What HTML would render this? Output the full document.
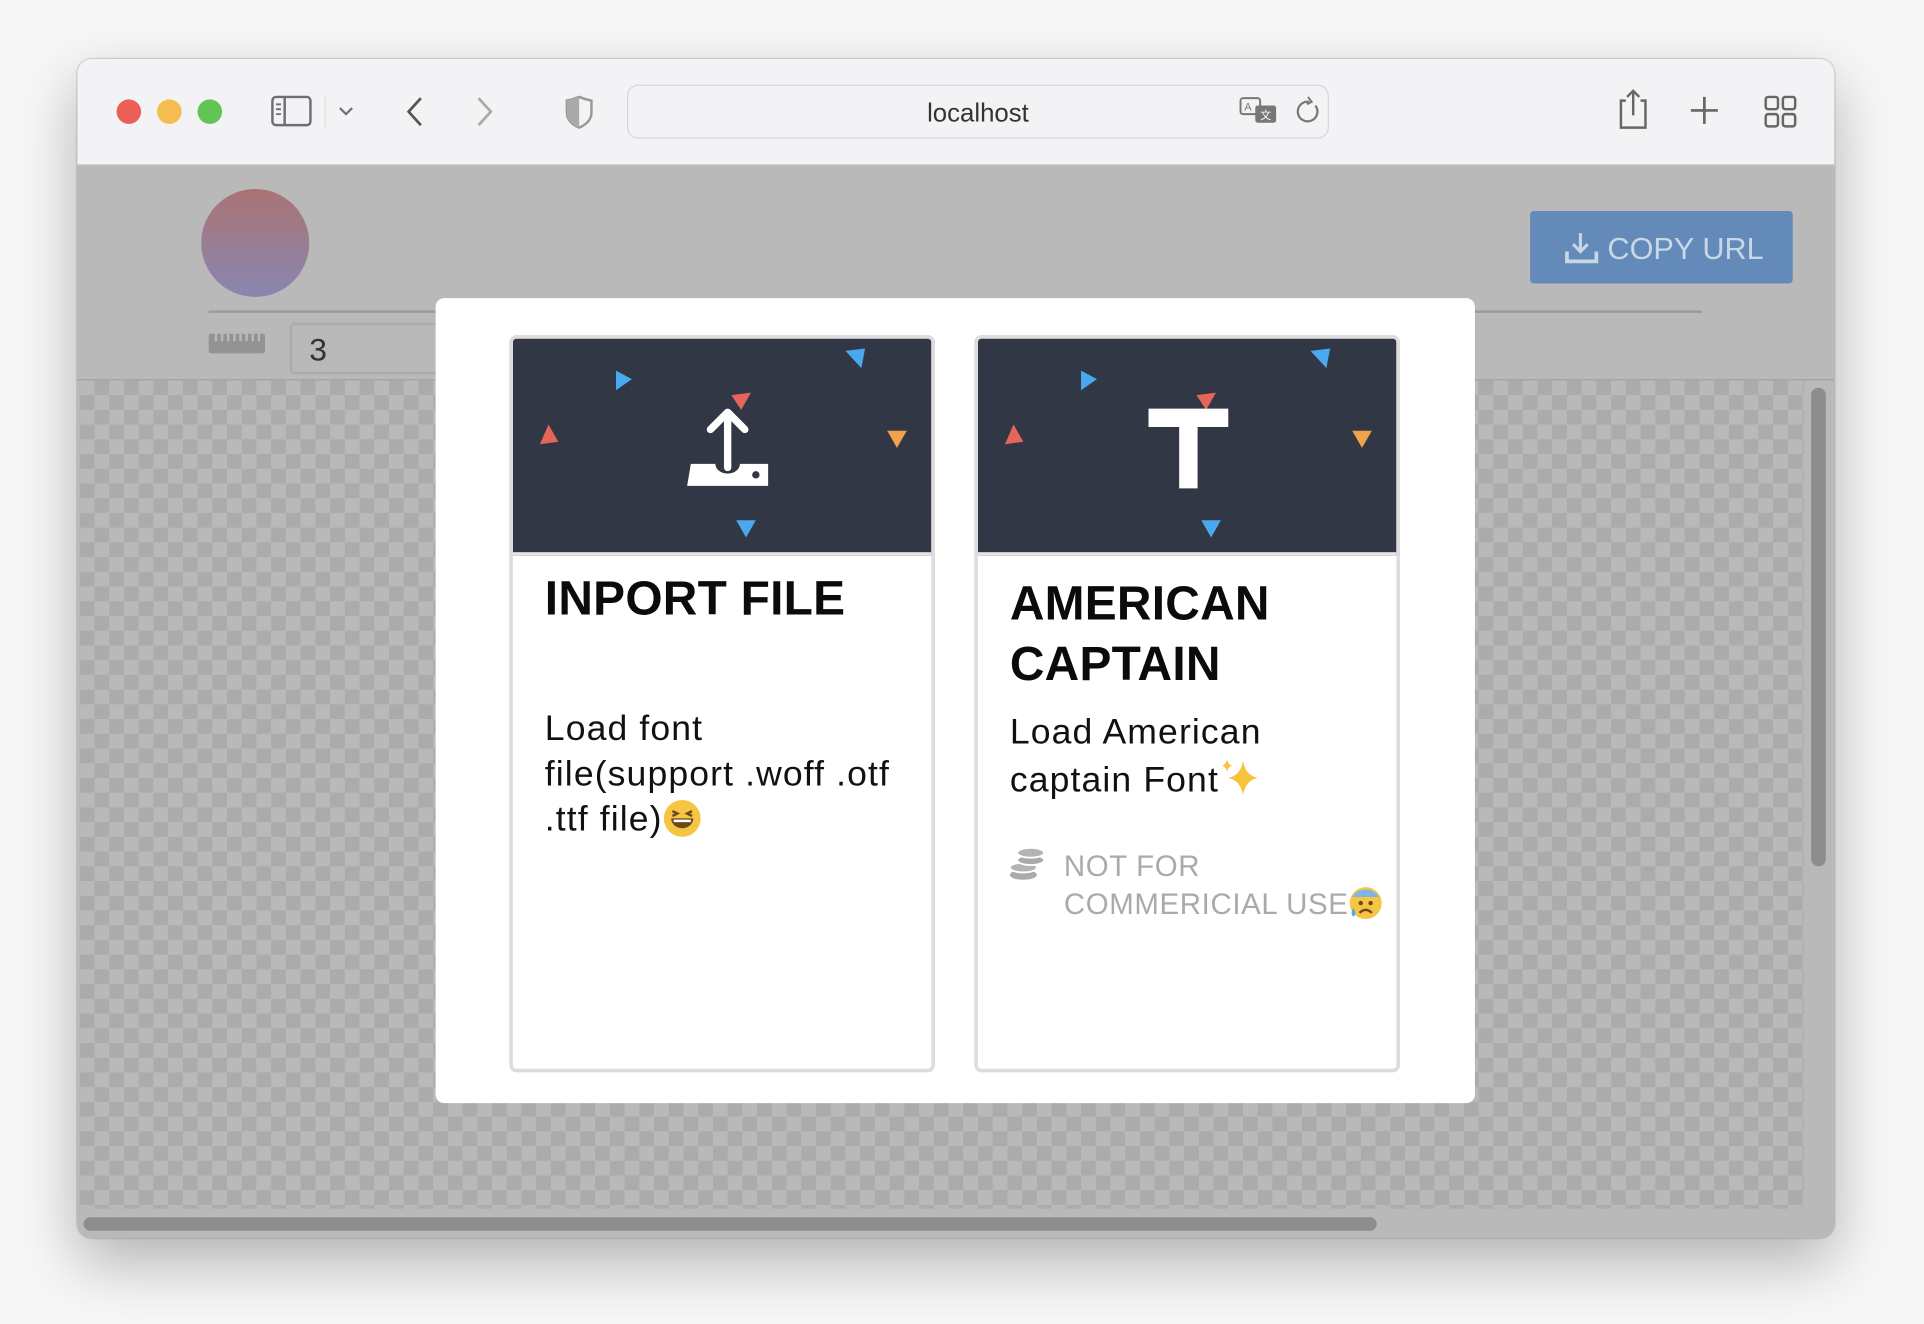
<!DOCTYPE html>
<html><head><meta charset="utf-8"><style>
html,body{margin:0;padding:0;width:1924px;height:1324px;overflow:hidden;background:#f7f7f7;font-family:"Liberation Sans",sans-serif}
#s{position:absolute;left:0;top:0;width:1568px;height:1079px;transform:scale(1.22704);transform-origin:0 0}
.a{position:absolute}
.win{left:63px;top:48px;width:1432px;height:961px;border-radius:12px;overflow:hidden;box-shadow:0 20px 50px rgba(0,0,0,.28),0 0 0 1px rgba(0,0,0,.12);background:#bab9ba}
.tb{left:0;top:0;width:1432px;height:86px;background:#f3f2f5;border-bottom:1px solid #b9b9b9}
.dot{width:20px;height:20px;border-radius:50%;top:33px}
.card{width:341px;height:595px;border:3px solid #dedcdd;border-radius:6px;background:#fff;overflow:hidden}
.hd{left:0;top:0;width:100%;height:174px;background:#323746;border-bottom:3px solid #e6e4e5}
.tt{font-weight:bold;font-size:39px;color:#0b0b0b;line-height:49px;letter-spacing:0.2px}
.bd{font-size:29px;color:#111;line-height:37px;white-space:nowrap;letter-spacing:0.9px}
</style></head><body><div id="s">
<div class="a win">
 <div class="a tb">
  <div class="a dot" style="left:32px;background:#ec5f57"></div>
  <div class="a dot" style="left:65px;background:#f5bd4f"></div>
  <div class="a dot" style="left:98px;background:#61c455"></div>
  <svg class="a" style="left:155px;top:28px" width="90" height="32"><rect x="4" y="3" width="31" height="23" rx="3" fill="none" stroke="#6e6e72" stroke-width="2"/><line x1="14" y1="3" x2="14" y2="26" stroke="#6e6e72" stroke-width="2"/><line x1="7" y1="9" x2="11" y2="9" stroke="#6e6e72" stroke-width="1.5"/><line x1="7" y1="13" x2="11" y2="13" stroke="#6e6e72" stroke-width="1.5"/><line x1="7" y1="17" x2="11" y2="17" stroke="#6e6e72" stroke-width="1.5"/><line x1="47" y1="2" x2="47" y2="28" stroke="#ddd" stroke-width="1"/><path d="M59 12l5 5 5-5" fill="none" stroke="#6e6e72" stroke-width="1.8"/></svg>
  <svg class="a" style="left:262px;top:28px" width="170" height="32"><path d="M18 4L8 15l10 11" fill="none" stroke="#555" stroke-width="2.2"/><path d="M65 4l10 11-10 11" fill="none" stroke="#aaa" stroke-width="2.2"/><path d="M147 3c5 2 10 3 10 3v10c0 6-5 10-10 12-5-2-10-6-10-12V6s5-1 10-3z" fill="none" stroke="#999" stroke-width="2"/><path d="M147 3v25c-5-2-10-6-10-12V6z" fill="#aaa"/></svg>
  <div class="a" style="left:448px;top:21px;width:570px;height:42px;border:1px solid #d6d6d8;border-radius:9px;background:#f3f2f5"></div>
  <div class="a" style="left:448px;top:33px;width:572px;text-align:center;font-size:21px;color:#333">localhost</div>
  <svg class="a" style="left:946px;top:29px" width="70" height="30"><rect x="2" y="3" width="16" height="13" rx="2" fill="none" stroke="#777" stroke-width="1.6"/><text x="5" y="13" font-size="9" fill="#777" font-family="Liberation Sans">A</text><rect x="14" y="9" width="17" height="14" rx="2" fill="#777"/><text x="18" y="20" font-size="9" fill="#fff" font-family="Liberation Sans">文</text><path d="M63 9a8 8 0 1 1-5-3" fill="none" stroke="#777" stroke-width="1.8"/><path d="M57 2l3 4-4 2" fill="none" stroke="#777" stroke-width="1.6"/></svg>
  <svg class="a" style="left:1250px;top:24px" width="160" height="36"><path d="M12 10H8v22h20V10h-4M18 2v20M13 7l5-5 5 5" fill="none" stroke="#666" stroke-width="2"/><path d="M76 7v22M65 18h22" stroke="#666" stroke-width="2.2"/><rect x="126" y="7" width="10" height="10" rx="2" fill="none" stroke="#666" stroke-width="2"/><rect x="140" y="7" width="10" height="10" rx="2" fill="none" stroke="#666" stroke-width="2"/><rect x="126" y="21" width="10" height="10" rx="2" fill="none" stroke="#666" stroke-width="2"/><rect x="140" y="21" width="10" height="10" rx="2" fill="none" stroke="#666" stroke-width="2"/></svg>
 </div>
 <div class="a" style="left:101px;top:106px;width:88px;height:88px;border-radius:50%;background:linear-gradient(#a87474,#8a86b0)"></div>
 <div class="a" style="left:1184px;top:124px;width:214px;height:59px;background:#638ab8;border-radius:3px;color:#c9d6e6;font-size:25px;line-height:59px"><svg class="a" style="left:28px;top:17px" width="28" height="28"><path d="M13 1v15M7 10l6 6 6-6" fill="none" stroke="#c9d6e6" stroke-width="2.5"/><path d="M2 16v8h24v-8" fill="none" stroke="#c9d6e6" stroke-width="3"/></svg><span class="a" style="left:63px;top:2px">COPY URL</span></div>
 <div class="a" style="left:107px;top:205px;width:1217px;height:2px;background:#9c9b9c"></div>
 <svg class="a" style="left:107px;top:220px" width="48" height="22"><rect x="0" y="4" width="46" height="16" rx="2" fill="#949394"/><path d="M6 4v6M11 4v6M16 4v6M21 4v6M26 4v6M31 4v6M36 4v6M41 4v6" stroke="#bab9ba" stroke-width="2"/></svg>
 <div class="a" style="left:173px;top:215px;width:130px;height:38px;border:2px solid #adacad;border-radius:4px;font-size:26px;color:#333;line-height:40px;padding-left:14px">3</div>
 <div class="a" style="left:2px;top:262px;width:1405px;height:675px;background-color:#bab9ba;background-image:linear-gradient(45deg,#acabac 25%,transparent 25%,transparent 75%,#acabac 75%),linear-gradient(45deg,#acabac 25%,transparent 25%,transparent 75%,#acabac 75%);background-size:24px 24px;background-position:0 0,12px 12px"></div>
 <div class="a" style="left:0;top:261px;width:1432px;height:1px;background:#a3a2a3"></div>
 <div class="a" style="left:1413px;top:268px;width:12px;height:390px;border-radius:6px;background:#8e8d8e"></div>
 <div class="a" style="left:5px;top:944px;width:1054px;height:11px;border-radius:6px;background:#8e8d8e"></div>
</div>

<div class="a" style="left:355px;top:243px;width:847px;height:656px;background:#fff;border-radius:7px"></div>

<div class="a card" style="left:415px;top:273px">
 <div class="a hd"><svg width="346" height="174">
  <polygon points="84,26 84,42 97,33" fill="#4aa8ef"/>
  <polygon points="271,10 287,8 284,24" fill="#4aa8ef"/>
  <polygon points="178,46 194,44 186,58" fill="#e5655b"/>
  <polygon points="22,86 37,84 29,70" fill="#e5655b"/>
  <polygon points="305,75 321,75 313,89" fill="#f2a34a"/>
  <polygon points="182,148 198,148 190,162" fill="#4aa8ef"/>
  <path d="M175 105V60M161 74l14-14 14 14" fill="none" stroke="#fff" stroke-width="6" stroke-linecap="round" stroke-linejoin="round"/>
  <path d="M145 102h20a10 8 0 0 0 20 0h23v18h-66z" fill="#fff"/><circle cx="198" cy="111" r="3" fill="#323746"/>
 </svg></div>
 <div class="a tt" style="left:26px;top:188px">INPORT FILE</div>
 <div class="a bd" style="left:26px;top:300px">Load font<br>file(support .woff .otf<br>.ttf file)<svg width="32" height="32" style="vertical-align:-6px"><circle cx="16" cy="16" r="15" fill="#f6c544"/><path d="M7 16h18a9 8 0 0 1-18 0z" fill="#6b4a18"/><path d="M9 17h14v2H9z" fill="#fff"/><path d="M8 10l4 2-4 2M24 10l-4 2 4 2" fill="none" stroke="#6b4a18" stroke-width="2"/></svg></div>
</div>

<div class="a card" style="left:794px;top:273px">
 <div class="a hd"><svg width="346" height="174">
  <polygon points="84,26 84,42 97,33" fill="#4aa8ef"/>
  <polygon points="271,10 287,8 284,24" fill="#4aa8ef"/>
  <polygon points="178,46 194,44 186,58" fill="#e5655b"/>
  <polygon points="22,86 37,84 29,70" fill="#e5655b"/>
  <polygon points="305,75 321,75 313,89" fill="#f2a34a"/>
  <polygon points="182,148 198,148 190,162" fill="#4aa8ef"/>
  <path d="M139 57h65v15h-25v50h-15v-50h-25z" fill="#fff"/>
 </svg></div>
 <div class="a tt" style="left:26px;top:192px">AMERICAN<br>CAPTAIN</div>
 <div class="a bd" style="left:26px;top:303px">Load American<br>captain Font<svg width="34" height="34" style="vertical-align:-5px"><path d="M20 4q2 12 12 14q-10 2-12 14q-2-12-12-14q10-2 12-14z" fill="#f8c23a"/><path d="M7 3q1 4 4 5q-3 1-4 5q-1-4-4-5q3-1 4-5z" fill="#f8c23a"/></svg></div>
 <svg class="a" style="left:25px;top:413px" width="32" height="32"><ellipse cx="12" cy="24" rx="11" ry="4" fill="#aaa"/><ellipse cx="12" cy="18" rx="11" ry="4" fill="#b4b4b4" stroke="#fff" stroke-width="1.5"/><ellipse cx="18" cy="12" rx="11" ry="4" fill="#aaa" stroke="#fff" stroke-width="1.5"/><ellipse cx="18" cy="6" rx="11" ry="4" fill="#b4b4b4" stroke="#fff" stroke-width="1.5"/></svg>
 <div class="a" style="left:70px;top:416px;font-size:24px;line-height:30px;color:#aaa;white-space:nowrap;letter-spacing:0.5px">NOT FOR<br>COMMERICIAL USE<svg width="28" height="28" style="vertical-align:-5px"><circle cx="14" cy="14" r="13" fill="#f6c544"/><path d="M3 9a13 13 0 0 1 22 0z" fill="#7fb4e6"/><circle cx="10" cy="14" r="1.8" fill="#6b4a18"/><circle cx="18" cy="14" r="1.8" fill="#6b4a18"/><path d="M9 22q5-5 10 0" fill="none" stroke="#6b4a18" stroke-width="2"/><path d="M4 18q-3 5 0 7q3-2 0-7z" fill="#4aa8ef"/></svg></div>
</div>
</div></body></html>
